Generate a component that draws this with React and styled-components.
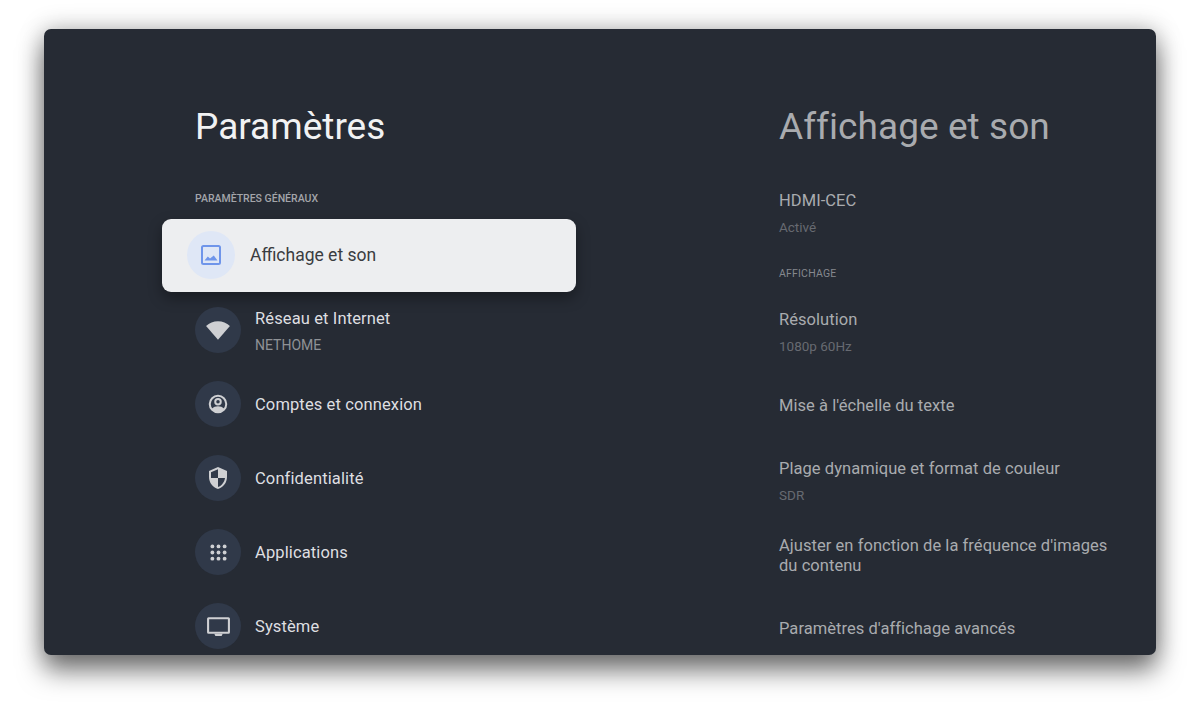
import React from 'react';
import styled, { createGlobalStyle } from 'styled-components';

const GlobalStyle = createGlobalStyle`
  html, body {
    margin: 0;
    height: 100%;
    background: #fff;
  }
  body {
    font-family: "Roboto", "Liberation Sans", sans-serif;
    overflow: hidden;
  }
`;

const Page = styled.div`
  padding: 29px 44px 0;
`;

const Panel = styled.main`
  height: 626px;
  display: grid;
  grid-template-columns: 735px 1fr;
  overflow: hidden;
  border-radius: 7px;
  background: #262b34;
  box-shadow: 0 16px 26px rgba(0, 0, 0, 0.5), 0 0 24px rgba(0, 0, 0, 0.28);
`;

const Column = styled.section`
  padding-top: 75px;
  padding-left: ${p => p.$inset || 0}px;
`;

const Title = styled.h1`
  margin: 0;
  height: 44px;
  font-size: 37px;
  line-height: 45px;
  font-weight: 400;
  letter-spacing: ${p => p.$dim ? 0.06 : 0}px;
  color: ${p => p.$dim ? '#a9abaf' : '#f1f2f3'};
`;

const Overline = styled.div`
  margin-top: ${p => p.$top || 0}px;
  font-size: 10.5px;
  line-height: 14px;
  font-weight: ${p => p.$muted ? 400 : 500};
  letter-spacing: ${p => p.$muted ? 0.2 : 0}px;
  color: ${p => p.$muted ? '#85888e' : '#a3a5aa'};
`;

const Menu = styled.ul`
  list-style: none;
  margin: 13px 0 0;
  padding: 0;
`;

const SelectedRow = styled.li`
  width: 414px;
  height: 73px;
  margin: 0 0 1px -33px;
  padding: 0 0 1px 25px;
  box-sizing: border-box;
  display: flex;
  align-items: center;
  gap: 15px;
  border-radius: 9px;
  background: #edeef0;
  box-shadow: 0 6px 14px rgba(0, 0, 0, 0.35);
`;

const SelectedDisc = styled.span`
  width: 48px;
  height: 48px;
  border-radius: 50%;
  display: flex;
  align-items: center;
  justify-content: center;
  background: #dfe7f6;
  color: #6f95ea;
`;

const SelectedLabel = styled.span`
  font-size: 17.5px;
  color: #3a3c40;
`;

const Row = styled.li`
  height: 74px;
  display: flex;
  align-items: center;
  gap: 14px;
`;

const Disc = styled.span`
  width: 46px;
  height: 46px;
  flex: none;
  border-radius: 50%;
  display: flex;
  align-items: center;
  justify-content: center;
  background: #303949;
  color: #cfd0d3;
`;

const RowText = styled.span`
  display: flex;
  flex-direction: column;
  gap: 8px;
  padding-top: 2px;
`;

const RowLabel = styled.span`
  font-size: 16.5px;
  line-height: 20px;
  letter-spacing: 0.12px;
  color: #dedfe1;
`;

const RowHint = styled.span`
  font-size: 14px;
  line-height: 16px;
  color: #8f9296;
`;

const Settings = styled.div`
  margin-top: 43px;
  display: flex;
  flex-direction: column;
`;

const Setting = styled.div`
  margin-top: ${p => p.$top}px;
`;

const SettingLabel = styled.div`
  font-size: 16.5px;
  line-height: 20px;
  letter-spacing: 0.05px;
  width: 345px;
  color: #a9abaf;
  & + div { margin-top: 8px; }
`;

const SettingHint = styled.div`
  font-size: 13.5px;
  line-height: 16px;
  color: #676a71;
`;

const ImageIcon = () => (
  <svg width="24" height="24" viewBox="0 0 24 24" fill="currentColor">
    <path fillRule="evenodd" d="M4.500 2h15A2.500 2.500 0 0 1 22 4.500v15a2.500 2.500 0 0 1-2.500 2.500h-15A2.500 2.500 0 0 1 2 19.500v-15A2.500 2.500 0 0 1 4.500 2zm0 2a.5.5 0 0 0-.5.5v15a.5.500 0 0 0 .5.500h15a.5.500 0 0 0 .5-.500v-15a.5.5 0 0 0-.5-.5z" />
    <path d="M5.500 17.500 8.800 13.500 11 15.500 14.800 12.500 18.500 17.500z" />
  </svg>
);

const WifiIcon = () => (
  <svg width="26" height="26" viewBox="0 0 24 24" fill="currentColor">
    <path d="M12 21 1 8.200C4 5.600 7.800 4 12 4s8 1.600 11 4.200z" />
  </svg>
);

const AccountIcon = () => (
  <svg width="22" height="22" viewBox="0 0 24 24" fill="none" stroke="currentColor" strokeWidth="2.200">
    <circle cx="12" cy="12" r="9" />
    <circle cx="12" cy="9.500" r="3" />
    <path fill="currentColor" stroke="none" d="M5 17.500C7 15.200 9.500 14.500 12 14.500s5 .7 7 3A9 9 0 0 1 5 17.500z" />
  </svg>
);

const ShieldIcon = () => (
  <svg width="24" height="24" viewBox="0 0 24 24" fill="currentColor">
    <path d="M12 1 3 5v6c0 5.550 3.840 10.740 9 12 5.160-1.260 9-6.450 9-12V5l-9-4zm0 10.990h7c-.530 4.120-3.280 7.790-7 8.940V12H5V6.300l7-3.110v8.800z" />
  </svg>
);

const AppsIcon = () => (
  <svg width="21" height="21" viewBox="0 0 24 24" fill="currentColor">
    {[5, 12, 19].map(y => [5, 12, 19].map(x => (
      <circle key={`${x}-${y}`} cx={x} cy={y} r="2.200" />
    )))}
  </svg>
);

const TvIcon = () => (
  <svg width="25" height="25" viewBox="0 0 24 24" fill="currentColor">
    <path fillRule="evenodd" d="M2.500 3h19A1.500 1.500 0 0 1 23 4.500v13a1.500 1.500 0 0 1-1.500 1.500h-19A1.500 1.500 0 0 1 1 17.500v-13A1.500 1.500 0 0 1 2.500 3zM3 5v12h18V5z" />
    <path d="M8 19h8l-1 2H9z" />
  </svg>
);

const menu = [
  { icon: <WifiIcon />, label: 'Réseau et Internet', hint: 'NETHOME' },
  { icon: <AccountIcon />, label: 'Comptes et connexion' },
  { icon: <ShieldIcon />, label: 'Confidentialité' },
  { icon: <AppsIcon />, label: 'Applications' },
  { icon: <TvIcon />, label: 'Système' },
];

export default function App() {
  return (
    <>
      <GlobalStyle />
      <Page>
        <Panel>
          <Column $inset={151}>
            <Title>Paramètres</Title>
            <Overline $top={44}>PARAMÈTRES GÉNÉRAUX</Overline>
            <Menu>
              <SelectedRow>
                <SelectedDisc><ImageIcon /></SelectedDisc>
                <SelectedLabel>Affichage et son</SelectedLabel>
              </SelectedRow>
              {menu.map(item => (
                <Row key={item.label}>
                  <Disc>{item.icon}</Disc>
                  <RowText>
                    <RowLabel>{item.label}</RowLabel>
                    {item.hint && <RowHint>{item.hint}</RowHint>}
                  </RowText>
                </Row>
              ))}
            </Menu>
          </Column>
          <Column>
            <Title $dim>Affichage et son</Title>
            <Settings>
              <Setting $top={0}>
                <SettingLabel>HDMI-CEC</SettingLabel>
                <SettingHint>Activé</SettingHint>
              </Setting>
              <Overline $muted $top={32}>AFFICHAGE</Overline>
              <Setting $top={29}>
                <SettingLabel>Résolution</SettingLabel>
                <SettingHint>1080p 60Hz</SettingHint>
              </Setting>
              <Setting $top={42}>
                <SettingLabel>Mise à l'échelle du texte</SettingLabel>
              </Setting>
              <Setting $top={43}>
                <SettingLabel>Plage dynamique et format de couleur</SettingLabel>
                <SettingHint>SDR</SettingHint>
              </Setting>
              <Setting $top={33}>
                <SettingLabel>Ajuster en fonction de la fréquence d'images du contenu</SettingLabel>
              </Setting>
              <Setting $top={43}>
                <SettingLabel>Paramètres d'affichage avancés</SettingLabel>
              </Setting>
            </Settings>
          </Column>
        </Panel>
      </Page>
    </>
  );
}
